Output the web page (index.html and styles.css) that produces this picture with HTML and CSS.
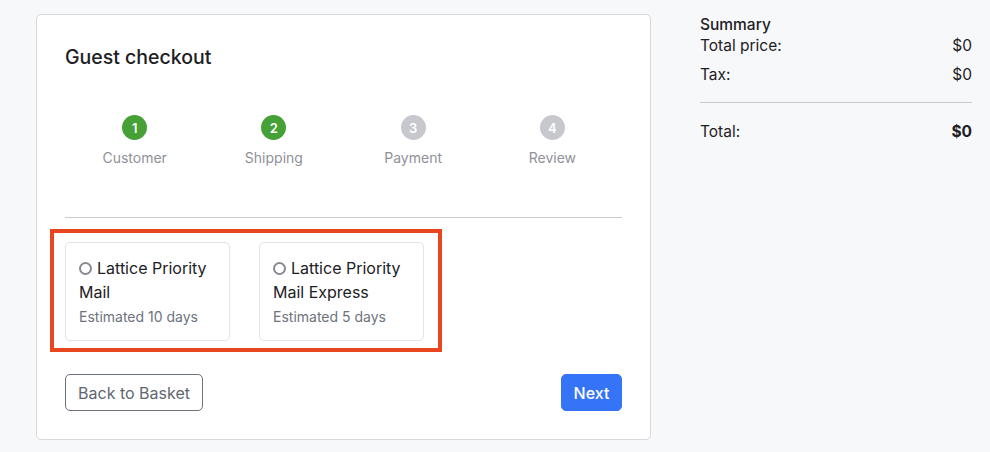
FILE: index.html
```html
<!DOCTYPE html>
<html>
<head>
<meta charset="utf-8">
<link rel="stylesheet" href="styles.css">
</head>
<body>
<div class="page">
  <section class="card">
    <h1 class="title">Guest checkout</h1>
    <div class="steps">
      <div class="step done"><span class="num">1</span><span class="label">Customer</span></div>
      <div class="step done"><span class="num">2</span><span class="label">Shipping</span></div>
      <div class="step"><span class="num">3</span><span class="label">Payment</span></div>
      <div class="step"><span class="num">4</span><span class="label">Review</span></div>
    </div>
    <hr class="divider">
    <div class="highlight">
      <div class="options">
        <label class="option">
          <div class="opt-name"><span class="radio"></span>Lattice Priority Mail</div>
          <div class="opt-est">Estimated 10 days</div>
        </label>
        <label class="option">
          <div class="opt-name"><span class="radio"></span>Lattice Priority Mail Express</div>
          <div class="opt-est">Estimated 5 days</div>
        </label>
      </div>
    </div>
    <div class="actions">
      <button class="btn btn-outline">Back to Basket</button>
      <button class="btn btn-primary">Next</button>
    </div>
  </section>
  <aside class="summary">
    <div class="sum-title">Summary</div>
    <div class="row"><span>Total price:</span><span>$0</span></div>
    <div class="row"><span>Tax:</span><span>$0</span></div>
    <hr class="sum-div">
    <div class="row total"><span>Total:</span><span class="bold">$0</span></div>
  </aside>
</div>
</body>
</html>
```
FILE: styles.css
```css
* { box-sizing: border-box; }
html, body { margin: 0; padding: 0; }
body {
  background: #f7f8fa;
  font-family: Inter, "Liberation Sans", Arial, sans-serif;
  color: #212529;
  width: 990px;
  height: 452px;
  overflow: hidden;
}
.page {
  display: flex;
  align-items: flex-start;
  padding: 14px 0 0 36px;
  gap: 49px;
}
.card {
  width: 615px;
  height: 426px;
  background: #fff;
  border: 1px solid #d6d8dc;
  border-radius: 5px;
  padding: 30px 28px 28px 28px;
  display: flex;
  flex-direction: column;
}
.title {
  margin: 0;
  font-size: 19.5px;
  font-weight: 500;
  line-height: 24px;
  color: #1d2024;
}
.steps {
  display: grid;
  grid-template-columns: repeat(4, 1fr);
  margin-top: 46px;
}
.step {
  display: flex;
  flex-direction: column;
  align-items: center;
}
.num {
  width: 25px;
  height: 25px;
  border-radius: 50%;
  background: #c6c8cd;
  color: #fff;
  font-size: 13px;
  font-weight: 600;
  display: flex;
  align-items: center;
  justify-content: center;
}
.step.done .num { background: #45a135; }
.label {
  margin-top: 9px;
  font-size: 14px;
  line-height: 18px;
  color: #8f9198;
}
.divider {
  margin: 50px 0 0 0;
  border: 0;
  border-top: 1px solid #c9cbcf;
  height: 0;
}
.highlight {
  margin: 11px 0 0 -15px;
  width: 392px;
  border: 4px solid #e8461e;
  padding: 9px 0 7px 11px;
}
.options {
  display: flex;
  gap: 29px;
}
.option {
  width: 165px;
  height: 99px;
  border: 1px solid #e1e3e6;
  border-radius: 5px;
  padding: 13px 13px;
  display: block;
}
.opt-name {
  font-size: 16px;
  line-height: 24px;
  color: #1d2024;
}
.radio {
  display: inline-block;
  width: 13px;
  height: 13px;
  border: 2px solid #8a8992;
  border-radius: 50%;
  margin-right: 5px;
  vertical-align: -1px;
}
.opt-est {
  font-size: 14px;
  line-height: 22px;
  color: #6c737d;
  margin-top: 2px;
}
.actions {
  margin-top: 22px;
  display: flex;
  justify-content: space-between;
}
.btn {
  font-family: inherit;
  font-size: 16px;
  height: 37px;
  border-radius: 5px;
  padding: 0 10px;
  cursor: pointer;
}
.btn-outline {
  width: 138px;
  background: #fff;
  border: 1px solid #6c737d;
  color: #5f666f;
}
.btn-primary {
  width: 61px;
  background: #3574f6;
  border: 1px solid #3574f6;
  color: #fff;
  font-weight: 500;
}
.summary {
  width: 272px;
  padding-top: 0;
  font-size: 15.5px;
  line-height: 21px;
  color: #1d2024;
}
.sum-title { font-weight: 500; }
.row {
  display: flex;
  justify-content: space-between;
  margin-bottom: 8px;
}
.sum-div {
  margin: 17px 0 18px 0;
  border: 0;
  border-top: 1px solid #c9cbcf;
  height: 0;
}
.bold { font-weight: 700; }
```
